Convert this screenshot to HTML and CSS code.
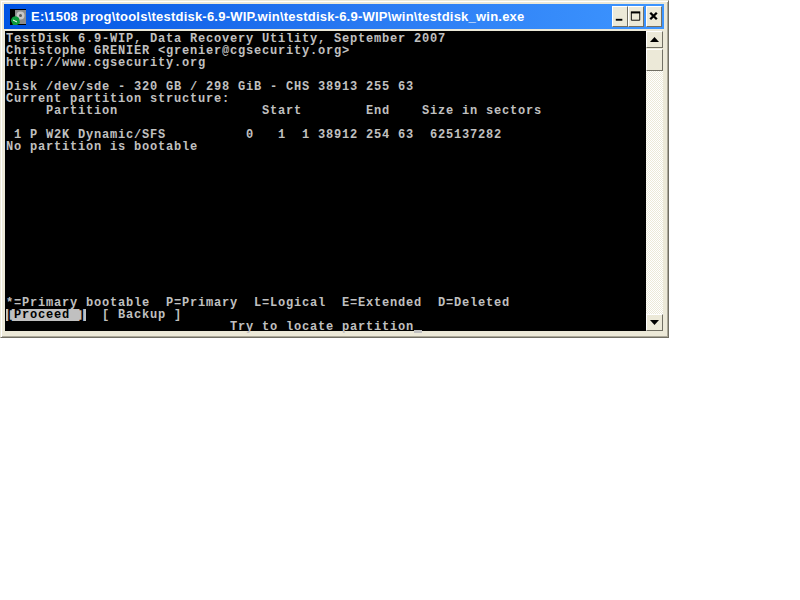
FILE: index.html
```html
<!DOCTYPE html>
<html lang="en">
<head>
<meta charset="utf-8">
<title>testdisk_win.exe</title>
<link rel="stylesheet" href="styles.css">
</head>
<body>
<div class="window">
  <div class="titlebar">
    <svg class="app-icon" width="16" height="16" viewBox="0 0 16 16">
      <rect width="16" height="16" fill="#000"/>
      <rect x="5" y="1" width="11" height="14" fill="#8c8c8c"/>
      <circle cx="10.500" cy="6.500" r="4" fill="#c8c8c8"/>
      <circle cx="10.500" cy="6.500" r="1.500" fill="#5c5c5c"/>
      <path d="M1 12a4.500 4.500 0 0 1 8-3l1 5-3 2H3z" fill="#0c9a3c"/>
      <path d="M3 11l4 2" stroke="#fff" stroke-width="1"/>
    </svg>
    <span class="title">E:\1508 prog\tools\testdisk-6.9-WIP.win\testdisk-6.9-WIP\win\testdisk_win.exe</span>
    <div class="caption-buttons">
      <div class="cap-btn"><svg width="15" height="15" viewBox="0 0 15 15"><rect x="3" y="10" width="7" height="2" fill="#000"/></svg></div>
      <div class="cap-btn"><svg width="15" height="15" viewBox="0 0 15 15"><path d="M2.500 3.500h9v8h-9z" fill="none" stroke="#000"/><rect x="2" y="2" width="10" height="2" fill="#000"/></svg></div>
      <div class="cap-btn cap-close"><svg width="15" height="15" viewBox="0 0 15 15"><path d="M3.500 3.500l7 7M10.500 3.500l-7 7" stroke="#000" stroke-width="2.500" fill="none"/></svg></div>
    </div>
  </div>
  <div class="client">
<pre class="console">TestDisk 6.9-WIP, Data Recovery Utility, September 2007
Christophe GRENIER &lt;grenier@cgsecurity.org&gt;
http://www.cgsecurity.org

Disk /dev/sde - 320 GB / 298 GiB - CHS 38913 255 63
Current partition structure:
     Partition                  Start        End    Size in sectors

 1 P W2K Dynamic/SFS          0   1  1 38912 254 63  625137282
No partition is bootable












*=Primary bootable  P=Primary  L=Logical  E=Extended  D=Deleted
<span class="selected">[Proceed ]</span>  [ Backup ]
                            Try to locate partition<span class="cursor"></span></pre>
    <div class="scrollbar">
      <div class="sb-btn"><svg width="9" height="5" viewBox="0 0 9 5"><path d="M4.500 0L9 5H0z" fill="#000"/></svg></div>
      <div class="sb-thumb"></div>
      <div class="sb-track"></div>
      <div class="sb-btn"><svg width="9" height="5" viewBox="0 0 9 5"><path d="M0 0h9L4.500 5z" fill="#000"/></svg></div>
    </div>
  </div>
</div>
</body>
</html>
```
FILE: styles.css
```css
html, body {
  margin: 0;
  padding: 0;
  background: #fff;
}
.window {
  box-sizing: border-box;
  width: 669px;
  height: 338px;
  padding: 4px;
  background: #ece9d8;
  border: 1px solid;
  border-color: #ece9d8 #716f64 #716f64 #ece9d8;
  box-shadow: inset 1px 1px 0 #fff, inset -1px -1px 0 #aca899;
  display: flex;
  flex-direction: column;
}
.titlebar {
  height: 25px;
  margin: -1px 0 0 -1px;
  background: linear-gradient(90deg, #0054e3 0%, #2a7af2 55%, #3d95ff 100%);
  display: flex;
  align-items: center;
  padding: 0 2px 0 6px;
}
.app-icon {
  flex: none;
}
.title {
  margin-left: 5px;
  color: #fff;
  font: bold 13px/25px "Liberation Sans", Arial, sans-serif;
  letter-spacing: 0.22px;
  white-space: nowrap;
  flex: 1;
}
.caption-buttons {
  display: flex;
}
.cap-btn {
  box-sizing: border-box;
  width: 16px;
  height: 21px;
  background: #ece9d8;
  border: 1px solid;
  border-color: #fff #716f64 #716f64 #fff;
  display: flex;
  align-items: center;
  justify-content: center;
}
.cap-close {
  margin-left: 2px;
}
.client {
  margin-top: 2px;
  display: flex;
  height: 300px;
}
.console {
  box-sizing: border-box;
  width: 641px;
  height: 300px;
  margin: 0;
  padding: 2px 0 0 1px;
  background: #000;
  color: #c0c0c0;
  font: bold 12px/12px "Liberation Mono", "Courier New", monospace;
  letter-spacing: 0.8px;
}
.selected {
  display: inline-block;
  height: 12px;
  background: #c0c0c0;
  color: #000;
}
.cursor {
  display: inline-block;
  width: 8px;
  height: 3px;
  vertical-align: -3px;
  background: #c0c0c0;
}
.scrollbar {
  width: 17px;
  display: flex;
  flex-direction: column;
}
.sb-btn {
  box-sizing: border-box;
  height: 17px;
  background: #ece9d8;
  border: 1px solid;
  border-color: #fff #716f64 #716f64 #fff;
  display: flex;
  align-items: center;
  justify-content: center;
}
.sb-thumb {
  box-sizing: border-box;
  height: 22px;
  margin-top: 1px;
  background: #ece9d8;
  border: 1px solid;
  border-color: #fff #716f64 #716f64 #fff;
}
.sb-track {
  flex: 1;
  background-color: #fff;
  background-image: conic-gradient(#ece9d8 25%, #fff 0 50%, #ece9d8 0 75%, #fff 0);
  background-size: 2px 2px;
}
```
